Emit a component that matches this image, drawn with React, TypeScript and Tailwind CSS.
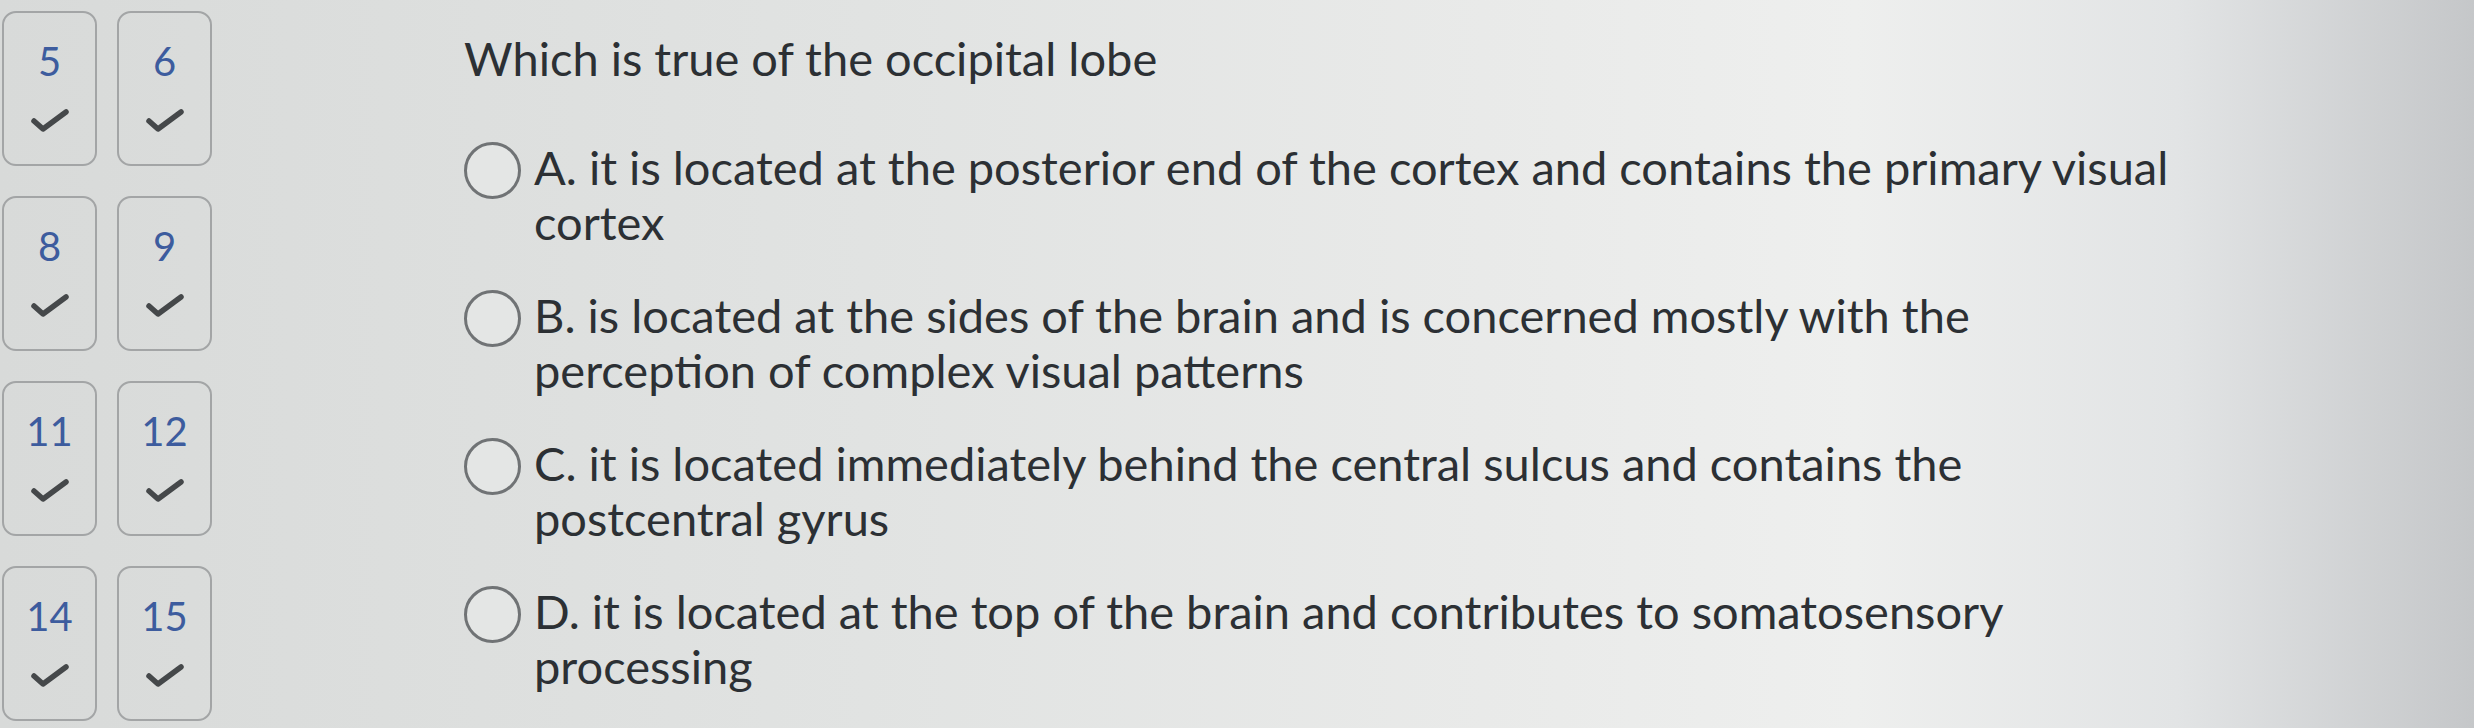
const tiles = ["5", "6", "8", "9", "11", "12", "14", "15"];

// lines are broken where the reference breaks them
const options = [
  ["A. it is located at the posterior end of the cortex and contains the primary visual", "cortex"],
  ["B. is located at the sides of the brain and is concerned mostly with the", "perception of complex visual patterns"],
  ["C. it is located immediately behind the central sulcus and contains the", "postcentral gyrus"],
  ["D. it is located at the top of the brain and contributes to somatosensory", "processing"],
];

const Check = () => (
  <svg width="42" height="28" viewBox="0 0 42 28" fill="none">
    <path
      d="M5 14 L14 22 L37 5"
      stroke="#45484a"
      strokeWidth="5.5"
      strokeLinecap="round"
      strokeLinejoin="round"
    />
  </svg>
);

export default function App() {
  return (
    <div
      className="w-full h-[728px] overflow-hidden flex bg-[linear-gradient(90deg,#d8dad9_0%,#e1e3e2_35%,#e9eae9_60%,#eeefee_75%,#e2e4e5_88%,#c5c7c9_100%)]"
      style={{ fontFamily: "Lato, 'Noto Sans', sans-serif" }}
    >
      {/* question navigator */}
      <div className="grid grid-cols-2 gap-x-[20px] gap-y-[30px] pl-[2px] pt-[11px] content-start shrink-0">
        {tiles.map((n) => (
          <div
            key={n}
            className="w-[95px] h-[155px] rounded-[14px] border-2 border-[#a3a5a6] flex flex-col items-center pt-[26px] gap-[24px]"
          >
            <span className="text-[40px] leading-[44px] text-[#3d5c9e]">{n}</span>
            <Check />
          </div>
        ))}
      </div>

      {/* question */}
      <div className="ml-[252px] pt-[30px] text-[#2c3034]">
        <h1 className="text-[47px] leading-[56px]">Which is true of the occipital lobe</h1>
        <div className="mt-[54px] flex flex-col gap-[38px]">
          {options.map(([first, second]) => (
            <label key={first} className="flex items-start gap-[13px]">
              <span className="mt-[2px] w-[57px] h-[57px] shrink-0 rounded-full border-[3px] border-[#707375] bg-[#e4e6e5]" />
              <span className="text-[47px] leading-[55px] whitespace-nowrap">
                {first}
                <br />
                {second}
              </span>
            </label>
          ))}
        </div>
      </div>
    </div>
  );
}
